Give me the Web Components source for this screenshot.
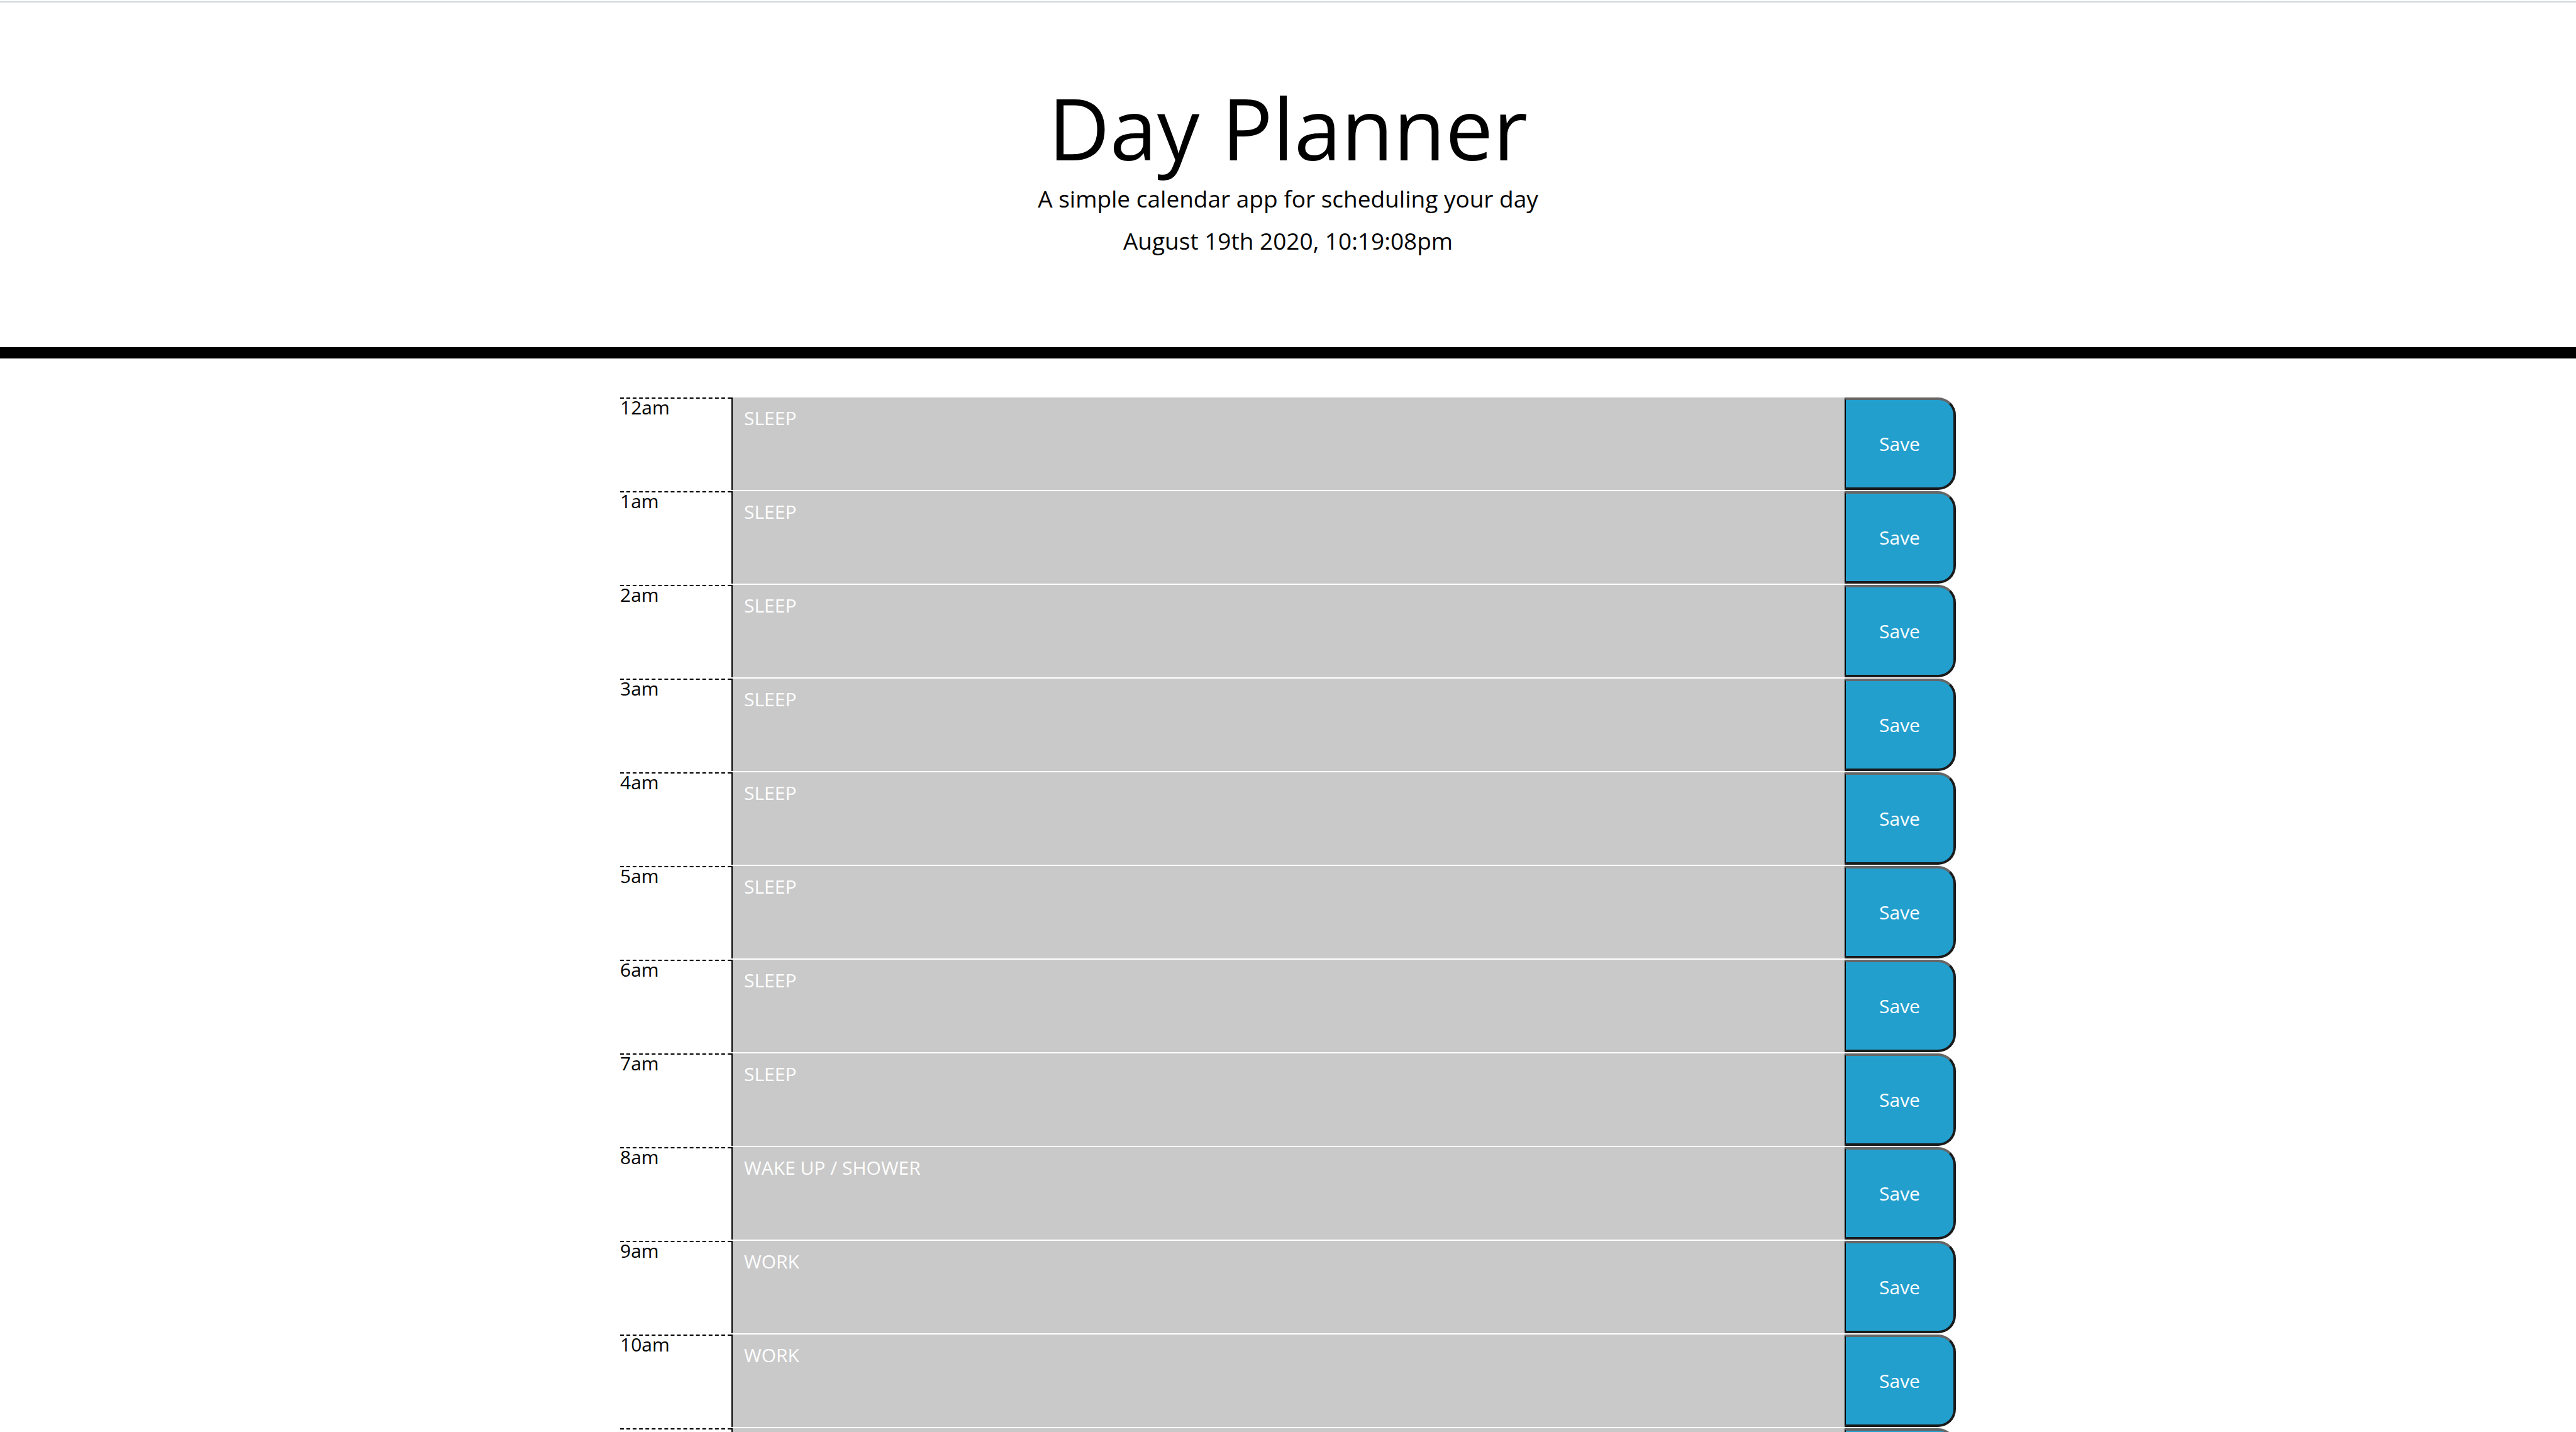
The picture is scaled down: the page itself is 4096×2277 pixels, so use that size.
<!DOCTYPE html>
<html lang="en">
<head>
<meta charset="utf-8">
<title>Day Planner</title>
<style>
  body { margin: 0; height: 100vh; overflow: hidden; background: #fff; color: #000; font-family: "Open Sans", sans-serif; font-size: 30px; }
</style>
</head>
<body>
<day-planner></day-planner>

<template id="header-template">
  <style>
    :host { display: block; text-align: center; margin-top: 2px; padding: 120px 24px 136px; border-top: 2px solid #d1d5da; border-bottom: 18px solid #000; }
    h1, p { margin: 0; font-weight: 400; }
    h1 { font-size: 135px; line-height: 158px; }
    p { font-size: 37px; line-height: 67px; }
  </style>
  <h1><slot name="title"></slot></h1>
  <p><slot name="lead"></slot></p>
  <p><slot name="date"></slot></p>
</template>

<template id="block-template">
  <style>
    :host { display: grid; grid-template-columns: 1fr 10fr 1fr; height: 147px; margin-bottom: 2px; }
    label { border-top: 2px dashed #000; line-height: 28px; }
    textarea, button { font: inherit; color: #fff; margin: 0; box-sizing: border-box; width: 100%; height: 147px; }
    textarea { display: block; resize: none; overflow: hidden; outline: none; border: 0 solid #000; border-left-width: 2px; border-radius: 0; background: #c9c9c9; padding: 10px 18px; line-height: 45px; }
    button { padding: 0; background: #239fce; border-style: solid; border-width: 4px 4px 4px 2px; border-color: #666 #1a1a1a #1a1a1a #000; border-radius: 0 28px 28px 0; cursor: pointer; }
  </style>
  <label for="task"></label>
  <textarea id="task" spellcheck="false"></textarea>
  <button type="button" aria-label="Save"></button>
</template>

<template id="planner-template">
  <style>
    :host { display: block; }
    main { max-width: 2124px; margin: 62px auto 0; }
  </style>
  <planner-header>
    <span slot="title">Day Planner</span>
    <span slot="lead">A simple calendar app for scheduling your day</span>
    <span slot="date">August 19th 2020, 10:19:08pm</span>
  </planner-header>
  <main>
    <time-block hour="12am" task="SLEEP"></time-block>
    <time-block hour="1am" task="SLEEP"></time-block>
    <time-block hour="2am" task="SLEEP"></time-block>
    <time-block hour="3am" task="SLEEP"></time-block>
    <time-block hour="4am" task="SLEEP"></time-block>
    <time-block hour="5am" task="SLEEP"></time-block>
    <time-block hour="6am" task="SLEEP"></time-block>
    <time-block hour="7am" task="SLEEP"></time-block>
    <time-block hour="8am" task="WAKE UP / SHOWER"></time-block>
    <time-block hour="9am" task="WORK"></time-block>
    <time-block hour="10am" task="WORK"></time-block>
    <time-block></time-block>
  </main>
</template>

<script>
  class TemplateElement extends HTMLElement {
    constructor() {
      super();
      const template = document.getElementById(this.constructor.template);
      this.attachShadow({ mode: "open" }).append(template.content.cloneNode(true));
    }
  }

  class PlannerHeader extends TemplateElement {
    static template = "header-template";
  }

  // A block with no hour is an empty row: its label and button stay blank.
  class TimeBlock extends TemplateElement {
    static template = "block-template";
    connectedCallback() {
      const hour = this.getAttribute("hour") || "";
      this.shadowRoot.querySelector("label").textContent = hour;
      this.shadowRoot.querySelector("textarea").textContent = this.getAttribute("task") || "";
      this.shadowRoot.querySelector("button").textContent = hour ? "Save" : "";
    }
  }

  class DayPlanner extends TemplateElement {
    static template = "planner-template";
  }

  customElements.define("planner-header", PlannerHeader);
  customElements.define("time-block", TimeBlock);
  customElements.define("day-planner", DayPlanner);
</script>
</body>
</html>
